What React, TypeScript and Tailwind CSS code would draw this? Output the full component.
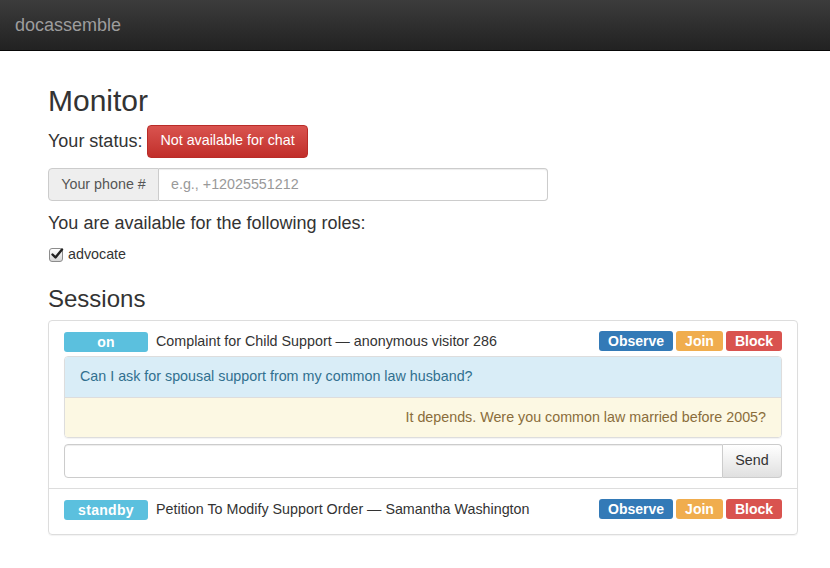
import React from 'react';

const FONT = { fontFamily: '"Liberation Sans", Arial, Helvetica, sans-serif' };

function Label({ text, color, className = '' }: { text: string; color: string; className?: string }) {
  return (
    <span className={`inline-flex items-center justify-center h-[20px] rounded-[3px] text-white font-bold text-[14px] leading-none ${color} ${className}`}>
      {text}
    </span>
  );
}

function SessionRow({ status, title }: { status: string; title: string }) {
  return (
    <div className="flex items-start justify-between h-[25px]">
      <div className="flex items-center gap-[8px]">
        <Label text={status} color="bg-[#5bc0de]" className="w-[84px] tracking-[0.3px]" />
        <span className="text-[14.3px] text-[#333]">{title}</span>
      </div>
      <div className="flex items-center gap-[3px]">
        <Label text="Observe" color="bg-[#337ab7]" className="px-[9px]" />
        <Label text="Join" color="bg-[#f0ad4e]" className="px-[9px]" />
        <Label text="Block" color="bg-[#d9534f]" className="px-[9px]" />
      </div>
    </div>
  );
}

export default function App() {
  return (
    <div className="min-h-[568px] bg-white text-[#333]" style={FONT}>
      {/* Navbar */}
      <div className="h-[51px] bg-gradient-to-b from-[#3c3c3c] to-[#222] border-b border-[#080808] px-[15px] flex items-center">
        <span className="text-[18px] text-[#9d9d9d]">docassemble</span>
      </div>

      <div className="ml-[48px] w-[750px]">
        <h1 className="mt-[33px] text-[30px] leading-[33px] font-normal">Monitor</h1>

        <div className="mt-[7px] flex items-center gap-[5px] h-[34px]">
          <span className="text-[18px] leading-[20px]">Your status:</span>
          <button className="h-[33px] px-[12px] rounded-[4px] border border-[#b92c28] bg-gradient-to-b from-[#d9534f] to-[#c12e2a] text-white text-[14.3px]">
            Not available for chat
          </button>
        </div>

        <div className="mt-[10px] flex h-[33px] w-[500px]">
          <span className="w-[111px] flex items-center justify-center bg-[#eee] border border-[#ccc] rounded-l-[4px] text-[14.3px] text-[#555]">
            Your phone #
          </span>
          <input
            className="flex-1 border border-l-0 border-[#ccc] rounded-r-[4px] px-[12px] text-[14.3px] outline-none shadow-[inset_0_1px_1px_rgba(0,0,0,0.075)] placeholder:text-[#999]"
            placeholder="e.g., +12025551212"
          />
        </div>

        <p className="mt-[12px] text-[18px] leading-[20px]">You are available for the following roles:</p>

        <div className="mt-[12px] flex items-center gap-[5px] h-[20px]">
          <span className="relative w-[14px] h-[14px] ml-[1px] rounded-[3px] border border-[#8c8c8c] bg-gradient-to-b from-white to-[#d6d6d6]">
            <svg viewBox="0 0 14 14" className="absolute left-[0px] top-[-2px] w-[14px] h-[14px]">
              <path d="M2.5 7.5 L5.5 10.5 L12 2.5" fill="none" stroke="#222" strokeWidth="2.4" strokeLinecap="round" strokeLinejoin="round" />
            </svg>
          </span>
          <span className="text-[14.3px]">advocate</span>
        </div>

        <h3 className="mt-[21px] text-[24px] leading-[26px] font-normal">Sessions</h3>

        <div className="mt-[8px] border border-[#ddd] rounded-[4px] shadow-[0_1px_1px_rgba(0,0,0,0.05)]">
          <div className="px-[15px] pt-[10px] pb-[10px] border-b border-[#ddd]">
            <SessionRow status="on" title="Complaint for Child Support — anonymous visitor 286" />
            <div className="border border-[#ddd] rounded-[4px] overflow-hidden shadow-[0_1px_1px_rgba(0,0,0,0.05)]">
              <div className="h-[40px] flex items-center px-[15px] bg-[#d9edf7] text-[#31708f] text-[14.3px]">
                Can I ask for spousal support from my common law husband?
              </div>
              <div className="h-[40px] flex items-center justify-end px-[15px] bg-[#fcf8e3] text-[#8a6d3b] text-[14.3px] border-t border-[#ddd]">
                It depends. Were you common law married before 2005?
              </div>
            </div>
            <div className="mt-[6px] flex h-[34px]">
              <input className="flex-1 border border-[#ccc] rounded-l-[4px] px-[12px] text-[14.3px] outline-none shadow-[inset_0_1px_1px_rgba(0,0,0,0.075)]" />
              <button className="w-[59px] border border-l-0 border-[#ccc] rounded-r-[4px] bg-gradient-to-b from-white to-[#e0e0e0] text-[14.3px] text-[#333]">
                Send
              </button>
            </div>
          </div>
          <div className="px-[15px] pt-[10px] pb-[10px]">
            <SessionRow status="standby" title="Petition To Modify Support Order — Samantha Washington" />
          </div>
        </div>
      </div>
    </div>
  );
}
